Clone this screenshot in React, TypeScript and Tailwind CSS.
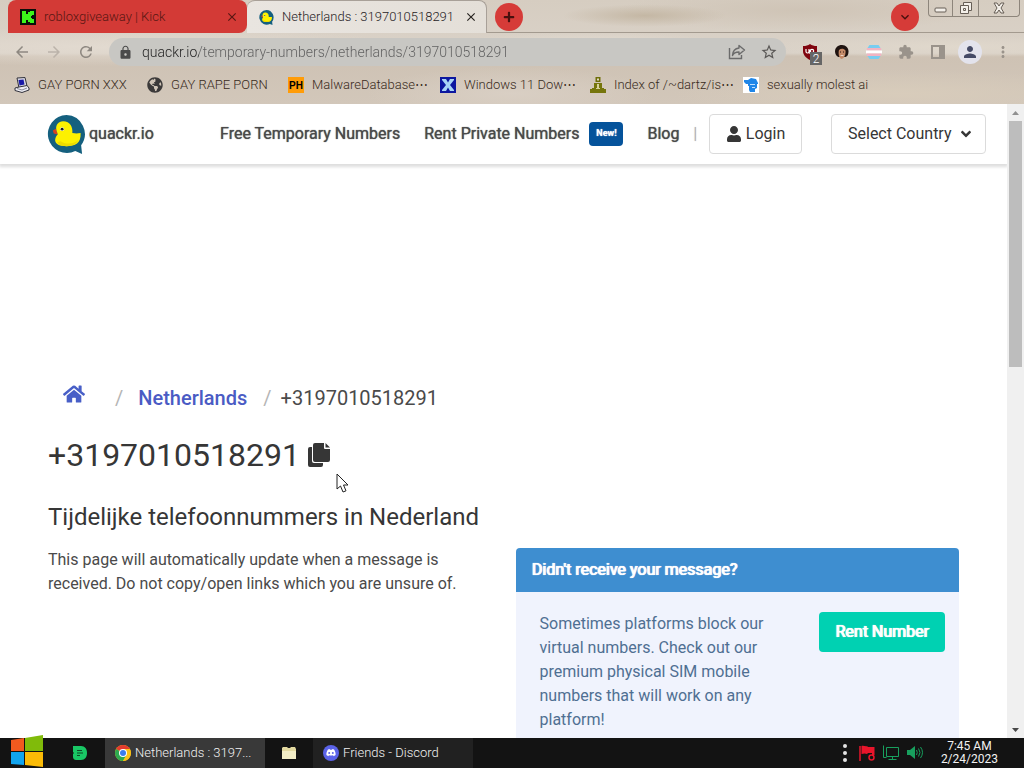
import { useState } from "react";
import type { ReactNode } from "react";
import { FaAngleDown, FaCopy, FaGlobeAmericas, FaHome, FaPlus, FaUser } from "react-icons/fa";
import {
  MdArrowBack,
  MdArrowForward,
  MdClose,
  MdExtension,
  MdKeyboardArrowDown,
  MdLock,
  MdMoreVert,
  MdPerson,
  MdRefresh,
  MdStarBorder,
} from "react-icons/md";

const PHONE = "+3197010518291";

// --- Small drawings ---
function KickIcon() {
  return (
    <svg width="16" height="16" viewBox="0 0 16 16" className="shrink-0">
      <rect width="16" height="16" fill="#0b0e0a" />
      <path d="M2 2h4v3h2V3h2V2h4v4h-2v1h-1v2h1v1h2v4h-4v-1H8v-2H6v3H2z" fill="#3df51a" />
    </svg>
  );
}

function DuckIcon({ size }: { size: number }) {
  return (
    <svg width={size} height={size} viewBox="0 0 40 40" className="shrink-0">
      <path d="M20 0a19.500 19.500 0 1 0 9 37l7 3-1-9A19.500 19.500 0 0 0 20 0z" fill="#15607f" />
      <path d="M9 14l-3 2 1 3 4 1z" fill="#d8401f" />
      <path
        d="M16.500 6.500c-5 0-7.500 4-7 8 .3 2.500 1.500 4 1.500 5.500-4 4-5 12 9 12 9 0 15-3 14.500-13.500-3.500.5-5 .5-8.500 0 .5-6-2-12-9.500-12z"
        fill="#fdf100"
      />
      <path d="M14 27c5 3.500 13 3 18-1-2 4-6 6-12 6-5 0-8-1-9.500-4z" fill="#eddb00" />
      <circle cx="15.500" cy="14.500" r="2" fill="#fff" />
      <circle cx="15.500" cy="14.500" r="1.500" fill="#1c1c1c" />
    </svg>
  );
}

function PcIcon() {
  return (
    <svg width="16" height="16" viewBox="0 0 16 16" className="shrink-0">
      <path d="M3 1l8-.5L13 9l-8 2z" fill="#d9d9e2" stroke="#33333d" />
      <path d="M4.500 3l5-.5 1 5-5 1z" fill="#1818a8" />
      <path d="M1 11l4-1 8-1.500 2 2.500v2L8 15.500l-7-2z" fill="#ececf2" stroke="#33333d" />
      <path d="M3 11.500l5 1.500 5-2" fill="none" stroke="#8c8c9c" />
    </svg>
  );
}

function PhIcon() {
  return (
    <span className="flex h-4 w-4 shrink-0 items-center justify-center bg-[#ff9c08] font-['Liberation_Sans'] text-[10px] font-bold text-black">
      PH
    </span>
  );
}

function XIcon() {
  return (
    <svg width="16" height="16" viewBox="0 0 16 16" className="shrink-0">
      <rect width="16" height="16" fill="#0c17a0" />
      <path d="M2 2h4l2 3.500L10 2h4v1l-4 5 4 5v1h-4l-2-3.500L6 14H2v-1l4-5-4-5z" fill="#a7d4f7" />
    </svg>
  );
}

function PersonSeatIcon() {
  return (
    <svg width="16" height="16" viewBox="0 0 16 16" className="shrink-0">
      <path d="M5.500 0h5v5h-5z" fill="#6e6e08" />
      <path d="M7 1.500h2v2H7z" fill="#e2d8c4" />
      <path d="M4 6h8v5h2v1h2v4H0v-4h2v-1h2z" fill="#76760c" />
      <path d="M7 7h2v4H7zM6 11h4v1H6z" fill="#d8d29a" />
    </svg>
  );
}

function BlueHeadIcon() {
  return (
    <svg width="16" height="16" viewBox="0 0 16 16" className="shrink-0">
      <rect width="16" height="16" fill="#fff" />
      <path d="M1 3h4l3-2 5 1 2 4v1h-1v4l-2 1v3H7l-1-2V9H5V7H3L1 5z" fill="#1f86e8" />
      <path d="M7 7h5v1H7zM9 10h3v1H9z" fill="#bfe0ff" />
    </svg>
  );
}

function ShareIcon() {
  return (
    <svg width="18" height="18" viewBox="0 0 18 18" fill="none" stroke="#6b6b6b" strokeWidth="1.400">
      <path d="M1.500 5v10.500h12V12" />
      <path d="M11 2.500l5.500 4.500-5.500 4.500V9C7.500 9 5.500 10 4.500 12.500 4.700 8.500 7 5.500 11 5z" strokeLinejoin="round" />
    </svg>
  );
}

function ShieldIcon() {
  return (
    <svg width="16" height="16" viewBox="0 0 16 16">
      <path d="M8 0c2 1.500 4 2 7 2v5c0 4-3 7-7 9-4-2-7-5-7-9V2c3 0 5-.5 7-2z" fill="#80050f" />
      <path d="M4 5v2.500a1.500 1.500 0 0 0 3 0V5m1 5V6" fill="none" stroke="#fff" strokeWidth="1.200" />
      <circle cx="10" cy="7" r="1.700" fill="none" stroke="#fff" strokeWidth="1.200" />
    </svg>
  );
}

function FaceIcon() {
  return (
    <svg width="16" height="16" viewBox="0 0 16 16">
      <path d="M8 1c4 0 6.500 3 6.500 6.500 0 3-1 5-3 5.500h-7C2.500 12.500 1 10 1 7.500 1 3.500 4 1 8 1z" fill="#1f1310" />
      <path d="M5 6c2-2 5-1.500 6.500.5.500 3-1 8-4 8.500C5 14 4 10 5 6z" fill="#c48a68" />
      <path d="M6 8h1m2 0h1" stroke="#2b1510" />
      <path d="M6 11c1 1 3 1 4 0z" fill="#fff" />
    </svg>
  );
}

function FlagCircleIcon() {
  return (
    <svg width="16" height="16" viewBox="0 0 16 16">
      <path d="M3.500 1h9l2 3h-13z" fill="#78cdf0" />
      <path d="M1 4h14l.5 2.500h-15z" fill="#f2b3c2" />
      <path d="M0 6.500h16v3H0z" fill="#fff" />
      <path d="M.5 9.500h15L15 12H1z" fill="#f2b3c2" />
      <path d="M1.500 12h13l-2 3h-9z" fill="#78cdf0" />
    </svg>
  );
}

function SidePanelIcon() {
  return (
    <svg width="16" height="16" viewBox="0 0 16 16">
      <path d="M2 2h12v12H2z" fill="none" stroke="#9a938b" strokeWidth="2" />
      <path d="M9 2h5v12H9z" fill="#9a938b" />
    </svg>
  );
}

function WindowsLogo() {
  return (
    <svg width="34" height="34" viewBox="0 0 34 34">
      <path d="M1 5l13-2v13H1z" fill="#f25a1f" />
      <path d="M15 3l18-3v16H15z" fill="#80bb0a" />
      <path d="M1 17h13v13L1 29z" fill="#12a4ee" />
      <path d="M15 17h18v15l-18-2z" fill="#fbbb06" />
    </svg>
  );
}

function GreenDIcon() {
  return (
    <svg width="16" height="16" viewBox="0 0 16 16">
      <path d="M1 1h8c4 0 6 3 6 7s-2 7-6 7H4c-1.500 0-3-1-3-3V9l1-1-1-1z" fill="#19c765" />
      <path d="M5 5.500h5M5 8h6M5 10.500h3" stroke="#0d4a27" />
    </svg>
  );
}

function ChromeIcon() {
  return (
    <svg width="16" height="16" viewBox="0 0 16 16" className="shrink-0">
      <circle cx="8" cy="8" r="8" fill="#fbc116" />
      <path d="M8 8L1.100 4A8 8 0 0 1 14.900 4z" fill="#e33b2e" />
      <path d="M8 8L1.100 4A8 8 0 0 0 8 16l3.500-6z" fill="#2da94f" />
      <path d="M8 4h6.900A8 8 0 0 1 8 16l3.500-6z" fill="#fbc116" />
      <circle cx="8" cy="8" r="4" fill="#fff" />
      <circle cx="8" cy="8" r="3" fill="#3b7ded" />
    </svg>
  );
}

function FolderIcon() {
  return (
    <svg width="16" height="16" viewBox="0 0 16 16">
      <path d="M1 3l1-1h4l1 1h2l1-1h4l1 2v10H1z" fill="#e3d9a0" />
      <path d="M1 6h14v8H1z" fill="#f3edc6" />
    </svg>
  );
}

function DiscordIcon() {
  return (
    <svg width="16" height="16" viewBox="0 0 16 16" className="shrink-0">
      <circle cx="8" cy="8" r="8" fill="#5b63e8" />
      <path
        d="M5 4.500l1.500-.5.5.8h2l.5-.8 1.500.5c1.200 1.700 1.800 3.500 1.600 5.500l-1.900 1.200-.7-1a6 6 0 0 1-4 0l-.7 1L3.400 10C3.200 8 3.800 6.200 5 4.500z"
        fill="#fff"
      />
      <circle cx="6.200" cy="8" r="1" fill="#5b63e8" />
      <circle cx="9.800" cy="8" r="1" fill="#5b63e8" />
    </svg>
  );
}

function TrayIcons() {
  return (
    <div className="flex items-center gap-2">
      <svg width="4" height="18" viewBox="0 0 4 18" className="mr-1" fill="#e4e4e4">
        <circle cx="2" cy="2" r="2" />
        <circle cx="2" cy="9" r="2" />
        <circle cx="2" cy="16" r="2" />
      </svg>
      <svg width="16" height="16" viewBox="0 0 16 16">
        <path d="M1 1v15" stroke="#e8152b" strokeWidth="1.500" />
        <path d="M2.500 1c2-1 4 1 6 0v1h7v8H13V8H9L8 9C6 8 4.500 8.500 2.500 9z" fill="#e8152b" />
        <circle cx="12.500" cy="12.500" r="2.500" fill="none" stroke="#e8152b" strokeWidth="1.500" />
      </svg>
      <svg width="16" height="16" viewBox="0 0 16 16" fill="none" stroke="#18a05e">
        <path d="M3.500 2.500h12v9h-12zM.5.5v12h3M9.500 12v2.500M5.500 14.500h8" />
      </svg>
      <svg width="16" height="16" viewBox="0 0 16 16">
        <path d="M0 5h3l5-4v13l-5-4H0z" fill="#18a05e" />
        <path d="M9.500 5q1.500 2.500 0 5M11.500 3.500q3 4 0 8M13.500 2q4 5.500 0 11" fill="none" stroke="#18a05e" />
      </svg>
    </div>
  );
}

const bookmarks: { icon: ReactNode; label: string; width: string }[] = [
  { icon: <PcIcon />, label: "GAY PORN XXX", width: "w-[133px]" },
  { icon: <FaGlobeAmericas size={16} className="shrink-0 text-[#3c3a3a]" />, label: "GAY RAPE PORN", width: "w-[141px]" },
  { icon: <PhIcon />, label: "MalwareDatabase⋯", width: "w-[152px]" },
  { icon: <XIcon />, label: "Windows 11 Dow⋯", width: "w-[150px]" },
  { icon: <PersonSeatIcon />, label: "Index of /~dartz/is⋯", width: "w-[153px]" },
  { icon: <BlueHeadIcon />, label: "sexually molest ai", width: "w-auto" },
];

// --- Browser window ---
function TabStrip() {
  return (
    <div className="flex h-[33px] pl-2">
      <div className="flex min-w-0 flex-[0_1_239px] items-center rounded-t-lg rounded-br-lg bg-[#d33a36] pr-2 pl-3 text-[#571713]">
        <KickIcon />
        <span className="ml-2 flex-1 truncate">robloxgiveaway | Kick</span>
        <button aria-label="Close tab"><MdClose size={14} /></button>
      </div>
      <div className="flex min-w-0 flex-[0_1_240px] items-center rounded-t-lg border-t border-r border-[#a8a098] bg-[linear-gradient(90deg,#e9e5e0,#e4dfd8)] pr-2 pl-3 text-[#26221f]">
        <DuckIcon size={15} />
        <span className="ml-2 flex-1 truncate">Netherlands : 3197010518291</span>
        <button aria-label="Close tab"><MdClose size={14} /></button>
      </div>
      <div className="flex flex-1 items-start border-b border-[#a39a8f] pl-2">
        <button aria-label="New tab" className="mt-[3px] flex h-7 w-7 items-center justify-center rounded-full bg-[#d63b38] text-[#48100e]">
          <FaPlus size={12} />
        </button>
        <button aria-label="Search tabs" className="mt-[3px] mr-[9px] ml-auto flex h-7 w-7 items-center justify-center rounded-full bg-[#d63b38] text-[#48100e]">
          <MdKeyboardArrowDown size={16} />
        </button>
        <div className="mr-1 flex h-[17px] rounded-b border border-t-0 border-[#8d857b]">
          <button aria-label="Minimize" className="flex w-6 justify-center border-r border-[#8d857b]">
            <svg width="13" height="16" viewBox="0 0 13 16">
              <rect x="1" y="8" width="11" height="4" rx="1" fill="#f3efe9" stroke="#665e56" />
            </svg>
          </button>
          <button aria-label="Restore" className="flex w-[26px] justify-center border-r border-[#8d857b]">
            <svg width="14" height="15" viewBox="0 0 14 15" fill="#f3efe9" stroke="#665e56">
              <path d="M4.500 2.500h8v8h-8z" />
              <path d="M1.500 5.500h8v8h-8zM4.500 8.500h2v2h-2z" />
            </svg>
          </button>
          <button aria-label="Close" className="flex w-10 justify-center">
            <svg width="12" height="15" viewBox="0 0 12 15">
              <path d="M1 3h3l2 3 2-3h3L8 8l3 5H8l-2-3-2 3H1l3-5z" fill="#f3efe9" stroke="#665e56" />
            </svg>
          </button>
        </div>
      </div>
    </div>
  );
}

function Toolbar() {
  return (
    <div className="flex h-[37px] items-center pt-px pr-4 pl-[13px]">
      <div className="flex gap-[14px] text-[#8e8881]">
        <button aria-label="Back"><MdArrowBack size={18} /></button>
        <button aria-label="Forward" className="text-[#bbb3aa]"><MdArrowForward size={18} /></button>
        <button aria-label="Reload"><MdRefresh size={18} /></button>
      </div>
      <div className="mr-4 ml-[14px] flex h-7 flex-1 items-center rounded-full bg-[#c8c7c3] px-2">
        <MdLock size={15} className="ml-px shrink-0 text-[#4b4b4b]" />
        <input
          aria-label="Address"
          defaultValue="quackr.io/temporary-numbers/netherlands/3197010518291"
          className="ml-[9px] min-w-0 flex-1 bg-[linear-gradient(90deg,#1f1f1f_57px,#5e5e5e_57px)] bg-clip-text text-[14px] text-transparent outline-none"
        />
        <button aria-label="Share"><ShareIcon /></button>
        <button aria-label="Bookmark" className="ml-[14px] text-[#5a5856]"><MdStarBorder size={18} /></button>
      </div>
      <div className="flex items-center gap-4">
        <button aria-label="Blocker" className="relative">
          <ShieldIcon />
          <span className="absolute top-2 left-2 flex h-[13px] w-3 items-center justify-center bg-[#666] text-[12px] text-white">2</span>
        </button>
        <button aria-label="Face"><FaceIcon /></button>
        <button aria-label="Flag"><FlagCircleIcon /></button>
        <button aria-label="Extensions" className="text-[#9a938b]"><MdExtension size={16} /></button>
        <button aria-label="Side panel"><SidePanelIcon /></button>
        <button aria-label="Profile" className="-mx-1 flex h-6 w-6 items-center justify-center rounded-full bg-[#e3e3ec] text-[#454a66]">
          <MdPerson size={18} />
        </button>
        <button aria-label="Menu" className="-mr-1 text-[#9a938b]"><MdMoreVert size={18} /></button>
      </div>
    </div>
  );
}

function BrowserChrome() {
  return (
    <header className="shrink-0 bg-[radial-gradient(ellipse_at_63%_15%,#c4b7a4_0%,transparent_9%),radial-gradient(ellipse_at_58%_45%,#e6dfd5_0%,transparent_18%),radial-gradient(ellipse_at_78%_10%,#cfc4b6_0%,transparent_16%),radial-gradient(ellipse_at_93%_45%,#e0d8cc_0%,transparent_14%),radial-gradient(ellipse_at_10%_45%,#e2dad0_0%,transparent_24%),radial-gradient(ellipse_at_50%_90%,#d9cfc4_0%,transparent_20%),radial-gradient(ellipse_at_88%_90%,#d8ccbb_0%,transparent_18%),linear-gradient(180deg,#d6cdc1_0%,#dad2c8_51%,#cec2b4_54%,#d2c7ba_100%)] font-['Roboto',sans-serif] text-[13px] font-light">
      <TabStrip />
      <Toolbar />
      <nav className="flex h-[34px] items-center pb-1 pl-[14px] text-[#382a20]">
        {bookmarks.map((b) => (
          <a key={b.label} href="#" className={`flex items-center gap-2 whitespace-nowrap ${b.width}`}>
            {b.icon}
            <span>{b.label}</span>
          </a>
        ))}
      </nav>
    </header>
  );
}

// --- Web page ---
function SiteNav() {
  const [country, setCountry] = useState("");

  return (
    <nav className="flex h-[60px] items-center pr-[21px] pl-[47px] whitespace-nowrap text-[#4a4a4a] shadow-[0_2px_3px_1px_#dedede]">
      <a href="#" className="flex items-center gap-[3px] [text-shadow:0_0_1px_currentColor]">
        <DuckIcon size={39} />
        quackr.io
      </a>
      <div className="ml-auto flex items-center [text-shadow:0_0_1px_currentColor]">
        <a href="#">Free Temporary Numbers</a>
        <a href="#" className="ml-6 flex items-center">
          Rent Private Numbers
          <span className="ml-[10px] flex h-6 w-[34px] items-center justify-center rounded bg-[#05539b] text-[9px] font-bold text-white">New!</span>
        </a>
        <a href="#" className="ml-6">Blog</a>
        <span className="ml-[14px] font-light text-[#aaa]">|</span>
      </div>
      <button className="ml-3 flex h-10 w-[93px] items-center justify-center gap-1 rounded border border-[#dbdbdb] text-[#363636]">
        <FaUser size={16} />
        Login
      </button>
      <div className="relative ml-[29px]">
        <select
          aria-label="Select Country"
          value={country}
          onChange={(e) => setCountry(e.target.value)}
          className="h-10 w-[155px] appearance-none rounded border border-[#dbdbdb] bg-white pl-4 text-[#363636]"
        >
          <option value="">Select Country</option>
          <option value="nl">Netherlands</option>
        </select>
        <FaAngleDown size={16} className="pointer-events-none absolute top-3 right-3 text-[#363636]" />
      </div>
    </nav>
  );
}

function RentPanel() {
  return (
    <article className="overflow-hidden rounded bg-[#f0f3fd]">
      <h3 className="bg-[#3e8ed0] px-4 py-[10px] leading-6 text-white [text-shadow:0_0_1px_currentColor,1px_0_0_currentColor]">
        Didn't receive your message?
      </h3>
      <div className="flex items-start pt-5 pr-[14px] pb-5 pl-6">
        <p className="flex-1 pr-12 leading-6 text-[#4f6f92]">
          Sometimes platforms block our virtual numbers. Check out our premium physical SIM mobile numbers that will work on any platform!
        </p>
        <button className="h-10 w-[126px] rounded bg-[#00d1b2] text-white [text-shadow:0_0_1px_currentColor,1px_0_0_currentColor]">
          Rent Number
        </button>
      </div>
    </article>
  );
}

function Scrollbar() {
  return (
    <div className="flex w-[17px] shrink-0 flex-col bg-[#f0f0f0]">
      <div className="flex h-[17px] items-center justify-center">
        <svg width="7" height="4" viewBox="0 0 7 4"><path d="M0 4h7L3.500 0z" fill="#909090" /></svg>
      </div>
      <div className="flex-1 px-[2px]">
        <div className="h-[41%] bg-[#bdbdbd]" />
      </div>
      <div className="flex h-[17px] items-center justify-center">
        <svg width="7" height="4" viewBox="0 0 7 4"><path d="M0 0h7L3.500 4z" fill="#484848" /></svg>
      </div>
    </div>
  );
}

function QuackrPage() {
  return (
    <div className="min-w-0 flex-1 overflow-hidden bg-white font-['Roboto',sans-serif] text-[16px] text-[#4a4a4a]">
      <SiteNav />
      <main className="px-12 pt-[219px]">
        <nav className="flex h-[30px] items-center text-[20px]">
          <a href="#" aria-label="Home" className="mb-2 ml-[15px] text-[#485fc7]"><FaHome size={22} /></a>
          <span className="ml-[30px] text-[#b5b5b5]">/</span>
          <a href="#" className="ml-[15px] font-medium text-[#4a5bc4]">Netherlands</a>
          <span className="ml-4 text-[#b5b5b5]">/</span>
          <span className="ml-[9px]">{PHONE}</span>
        </nav>
        <h1 className="mt-6 flex items-center gap-2 text-[32px] leading-9 text-[#363636]">
          {PHONE}
          <button
            aria-label="Copy number"
            className="relative"
            onClick={() => navigator.clipboard.writeText(PHONE)}
          >
            <svg width="22" height="24" viewBox="0 0 22 24" fill="#363636">
              <path d="M7 0h9v5a1 1 0 0 0 1 1h5v11a2 2 0 0 1-2 2H7a2 2 0 0 1-2-2V2a2 2 0 0 1 2-2z" />
              <path d="M17.500 0L22 4.500h-4.500zM2 4h2v14a2 2 0 0 0 2 2h9v2a2 2 0 0 1-2 2H2a2 2 0 0 1-2-2V6a2 2 0 0 1 2-2z" />
            </svg>
            <svg width="14" height="21" viewBox="0 0 14 21" className="absolute top-[30px] left-7">
              <path d="M1 1v15l3.500-3 2.500 6 3-1.200L7.500 12H12z" fill="#fff" stroke="#222" />
            </svg>
          </button>
        </h1>
        <h2 className="mt-7 text-[24px] leading-8 text-[#363636]">Tijdelijke telefoonnummers in Nederland</h2>
        <div className="mt-[15px] grid grid-cols-2 items-start gap-6">
          <p className="leading-6">
            This page will automatically update when a message is received. Do not copy/open links which you are unsure of.
          </p>
          <RentPanel />
        </div>
      </main>
    </div>
  );
}

// --- Desktop taskbar ---
function Taskbar() {
  return (
    <footer className="flex h-[30px] shrink-0 items-center bg-[#131313] font-['Roboto',sans-serif] text-[13px] font-light text-[#f2f2f2]">
      <button aria-label="Start" className="relative -mt-[7px] ml-[10px] h-[30px]"><WindowsLogo /></button>
      <button aria-label="Dashboard" className="ml-7"><GreenDIcon /></button>
      <button className="ml-[17px] flex h-full w-40 items-center gap-1 bg-[#393939] pl-[10px]">
        <ChromeIcon />
        Netherlands : 3197...
      </button>
      <button aria-label="Files" className="ml-4"><FolderIcon /></button>
      <button className="ml-4 flex h-full w-40 items-center gap-1 bg-[#212121] pl-[10px]">
        <DiscordIcon />
        Friends - Discord
      </button>
      <div className="ml-auto flex items-center pr-[26px]">
        <TrayIcons />
        <time className="ml-[18px] text-center text-[12px] leading-[13px] font-normal">
          7:45 AM
          <br />
          2/24/2023
        </time>
      </div>
    </footer>
  );
}

export default function App() {
  return (
    <div className="flex h-screen flex-col overflow-hidden">
      <BrowserChrome />
      <div className="flex min-h-0 flex-1">
        <QuackrPage />
        <Scrollbar />
      </div>
      <Taskbar />
    </div>
  );
}
